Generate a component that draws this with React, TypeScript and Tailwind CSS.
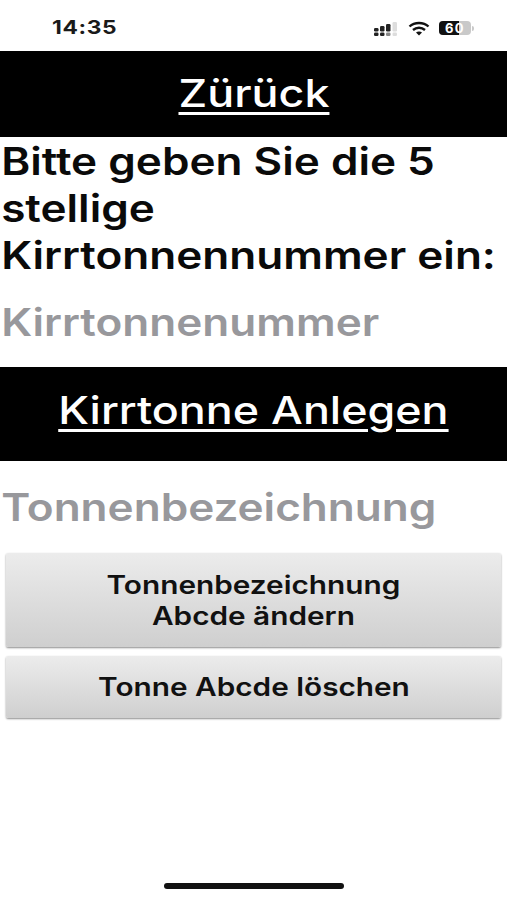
const font = "font-['Inter','Liberation_Sans',Arial,sans-serif]";

function StatusIcons() {
  return (
    <div className="flex items-center gap-[9px]">
      <svg width="26" height="15" viewBox="0 0 26 15" fill="#222">
        <rect x="1" y="7" width="4.5" height="3.5" rx="1.2" />
        <rect x="1" y="11.5" width="4.5" height="3.5" rx="1.2" />
        <rect x="7" y="5" width="4.5" height="5.5" rx="1.2" />
        <rect x="7" y="11.5" width="4.5" height="3.5" rx="1.2" />
        <rect x="13" y="3" width="4.5" height="7.5" rx="1.2" />
        <rect x="13" y="11.5" width="4.5" height="3.5" rx="1.2" fill="#888" />
        <rect x="19.5" y="1" width="4.5" height="9.5" rx="1.2" fill="#ddd" />
        <rect x="19.5" y="11.5" width="4.5" height="3.5" rx="1.2" fill="#ddd" />
      </svg>
      <svg width="22" height="15" viewBox="0 0 22 15" fill="none" stroke="#111" strokeWidth="2.4">
        <path d="M1.5 5.5 C6.5 0.8 15.5 0.8 20.5 5.5" />
        <path d="M5 9 C8.5 6 13.5 6 17 9" />
        <path d="M11 14.5 L8 11.5 C9.5 10.3 12.5 10.3 14 11.5 Z" fill="#111" stroke="none" />
      </svg>
      <div className="flex items-center">
        <div className="relative flex h-[14px] w-[32px] items-center justify-center overflow-hidden rounded-[4px] bg-[#c9c9c9]">
          <div className="absolute inset-y-0 left-0 w-[20px] bg-[#111]" />
          <span className="relative text-[13px] font-bold leading-none tracking-[1.5px] text-white">60</span>
        </div>
        <div className="ml-px h-[5px] w-[2px] rounded-r-sm bg-[#c9c9c9]" />
      </div>
    </div>
  );
}

function Band({ label, className }: { label: string; className: string }) {
  return (
    <div className={`flex items-center justify-center bg-black text-[38px] font-medium text-white ${className}`}>
      <span className="scale-x-[1.18] underline decoration-[3px] underline-offset-[5px]">{label}</span>
    </div>
  );
}

function GrayButton({ className, children }: { className: string; children: React.ReactNode }) {
  return (
    <button
      type="button"
      className={`mx-[6px] flex items-center justify-center rounded-[2px] bg-gradient-to-b from-[#ececec] to-[#cfcfcf] pt-px text-center text-[25px] font-semibold leading-[31px] text-[#111] shadow-[0_1px_2px_rgba(0,0,0,0.45)] ${className}`}
    >
      <span className="scale-x-[1.19]">{children}</span>
    </button>
  );
}

export default function App() {
  return (
    <div className={`flex h-[900px] w-[507px] flex-col overflow-hidden bg-white ${font}`}>
      {/* Status bar */}
      <div className="flex h-[51px] items-center justify-between pl-[52px] pr-[33px] pt-[5px]">
        <span className="origin-left scale-x-[1.2] text-[19px] font-bold tracking-[0.5px] text-[#1a1a1a]">14:35</span>
        <StatusIcons />
      </div>

      <Band label="Zürück" className="h-[86px] pb-[2px]" />

      <p className="w-[433px] origin-left scale-x-[1.16] pl-px pt-px text-[38px] font-semibold leading-[47px] text-[#0a0a0a]">
        Bitte geben Sie die 5 stellige Kirrtonnennummer ein:
      </p>

      <div className="flex h-[86px] origin-left scale-x-[1.16] items-center pl-px text-[38px] font-semibold text-[#98989c]">
        Kirrtonnenummer
      </div>

      <Band label="Kirrtonne Anlegen" className="mt-[2px] h-[94px] pb-[7px]" />

      <div className="flex h-[92px] origin-left scale-x-[1.16] items-center pl-px text-[38px] font-semibold text-[#98989c]">
        Tonnenbezeichnung
      </div>

      <GrayButton className="h-[94px]">
        Tonnenbezeichnung
        <br />
        Abcde ändern
      </GrayButton>
      <GrayButton className="mt-[9px] h-[62px]">Tonne Abcde löschen</GrayButton>

      {/* Home indicator */}
      <div className="mx-auto mt-[165px] h-[6px] w-[180px] rounded-full bg-[#111]" />
    </div>
  );
}
